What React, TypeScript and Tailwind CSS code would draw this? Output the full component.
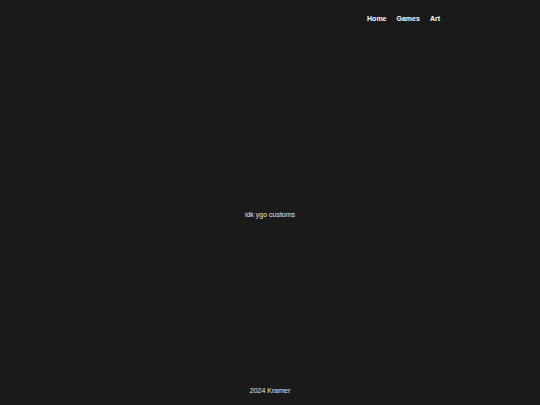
const links = ["Home", "Games", "Art"];

export default function App() {
  return (
    <div
      className="h-screen min-h-[405px] flex flex-col bg-[#1a1a1a] text-[#e6e6e6]"
      style={{ fontFamily: '"Liberation Sans", Arial, sans-serif' }}
    >
      <header className="h-[38px] flex items-center justify-end pr-[100px]">
        <nav className="flex gap-[10px]">
          {links.map((l) => (
            <a key={l} href="#" className="text-[7px] font-bold text-white">
              {l}
            </a>
          ))}
        </nav>
      </header>
      <main className="flex-1 flex items-center justify-center pt-[17px]">
        <p className="text-[7px]">idk ygo customs</p>
      </main>
      <footer className="h-[30px] pt-[2px] flex items-center justify-center">
        <p className="text-[7px]">2024 Kramer</p>
      </footer>
    </div>
  );
}
